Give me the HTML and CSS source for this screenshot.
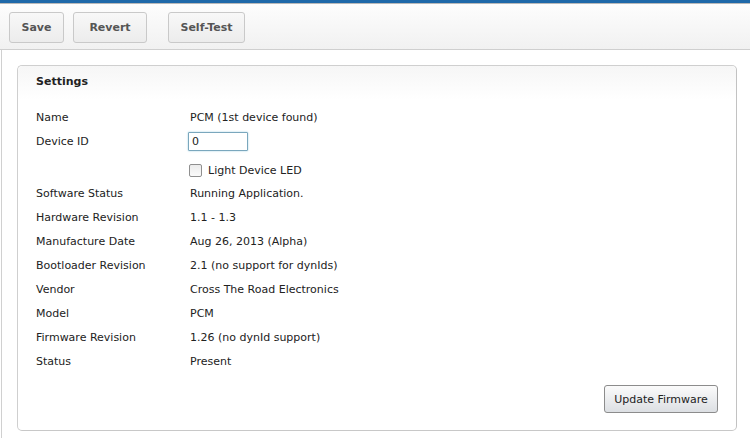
FILE: index.html
```html
<!DOCTYPE html>
<html>
<head>
<meta charset="utf-8">
<link rel="stylesheet" href="styles.css">
</head>
<body>
<div class="topbar"></div>
<div class="toolbar">
  <button class="tbtn">Save</button>
  <button class="tbtn">Revert</button>
  <button class="tbtn selftest">Self-Test</button>
</div>
<div class="content">
  <div class="panel">
    <div class="panel-head">Settings</div>
    <div class="panel-body">
      <div class="row"><div class="label">Name</div><div class="value">PCM (1st device found)</div></div>
      <div class="row"><div class="label">Device ID</div><div class="value"><input class="idinput" type="text" value="0"></div></div>
      <div class="row checkrow"><div class="label"></div><div class="value"><span class="checkbox"></span>Light Device LED</div></div>
      <div class="row"><div class="label">Software Status</div><div class="value">Running Application.</div></div>
      <div class="row"><div class="label">Hardware Revision</div><div class="value">1.1 - 1.3</div></div>
      <div class="row"><div class="label">Manufacture Date</div><div class="value">Aug 26, 2013 (Alpha)</div></div>
      <div class="row"><div class="label">Bootloader Revision</div><div class="value">2.1 (no support for dynIds)</div></div>
      <div class="row"><div class="label">Vendor</div><div class="value">Cross The Road Electronics</div></div>
      <div class="row"><div class="label">Model</div><div class="value">PCM</div></div>
      <div class="row"><div class="label">Firmware Revision</div><div class="value">1.26 (no dynId support)</div></div>
      <div class="row"><div class="label">Status</div><div class="value">Present</div></div>
      <div class="actions"><button class="ubtn">Update Firmware</button></div>
    </div>
  </div>
</div>
</body>
</html>
```
FILE: styles.css
```css
html, body { margin: 0; padding: 0; }
body {
  width: 750px; height: 438px; overflow: hidden;
  font-family: "DejaVu Sans", Verdana, sans-serif;
  font-size: 11px; color: #222; background: #fff;
}
.topbar { height: 3px; background: #1f69a9; border-bottom: 1px solid #b9b9b9; }
.toolbar {
  height: 46px; box-sizing: border-box;
  background: linear-gradient(#fdfdfd, #f1f1f1);
  border-bottom: 1px solid #cfcfcf;
  display: flex; align-items: flex-start;
  padding: 8px 0 0 9px;
}
.tbtn {
  height: 31px; box-sizing: border-box;
  border: 1px solid #c9c9c9; border-radius: 3px;
  background: linear-gradient(#f8f8f8, #ececec);
  font-family: inherit; font-weight: bold; font-size: 11px; color: #555;
  padding: 0; margin-right: 9px;
}
.tbtn:nth-child(1) { width: 55px; }
.tbtn:nth-child(2) { width: 74px; }
.tbtn.selftest { width: 77px; margin-left: 12px; }
.content {
  border-left: 1px solid #d0d0d0; margin-left: 1px;
  padding: 15px 13px 0 15px; height: 400px; box-sizing: border-box;
}
.panel {
  border: 1px solid #cfcfcf; border-right-color: #c2c2c2; border-bottom-color: #c8c8c8;
  border-radius: 5px; height: 366px; box-sizing: border-box;
}
.panel-head {
  height: 34px; line-height: 32px; padding-left: 18px;
  font-weight: bold; color: #222;
  background: linear-gradient(#f6f6f6, #fff);
  border-radius: 5px 5px 0 0;
}
.panel-body { padding: 5px 18px 0 18px; }
.row { display: flex; height: 24px; align-items: center; }
.label { width: 154px; }
.value { display: flex; align-items: center; }
.idinput {
  width: 60px; height: 19px; box-sizing: border-box; margin: 0 0 0 -2px; padding: 0 3px;
  border: 1px solid #7aa7bd; border-radius: 1px;
  font-family: inherit; font-size: 11px; color: #222;
  box-shadow: 0 0 2px #9ccde0;
}
.checkrow { height: 28px; padding-top: 6px; box-sizing: border-box; }
.checkbox {
  width: 13px; height: 13px; box-sizing: border-box; margin: 0 6px 0 -1px;
  border: 1px solid #8f8f8f; border-radius: 2px;
  background: linear-gradient(#ececec, #fafafa);
}
.actions { display: flex; justify-content: flex-end; padding-top: 12px; padding-right: 0; }
.ubtn {
  width: 114px; height: 28px; box-sizing: border-box; margin-right: 0;
  border: 1px solid #8c8c8c; border-radius: 3px;
  background: linear-gradient(#fbfbfb, #dcdfe3);
  font-family: inherit; font-size: 11px; color: #222;
}
```
